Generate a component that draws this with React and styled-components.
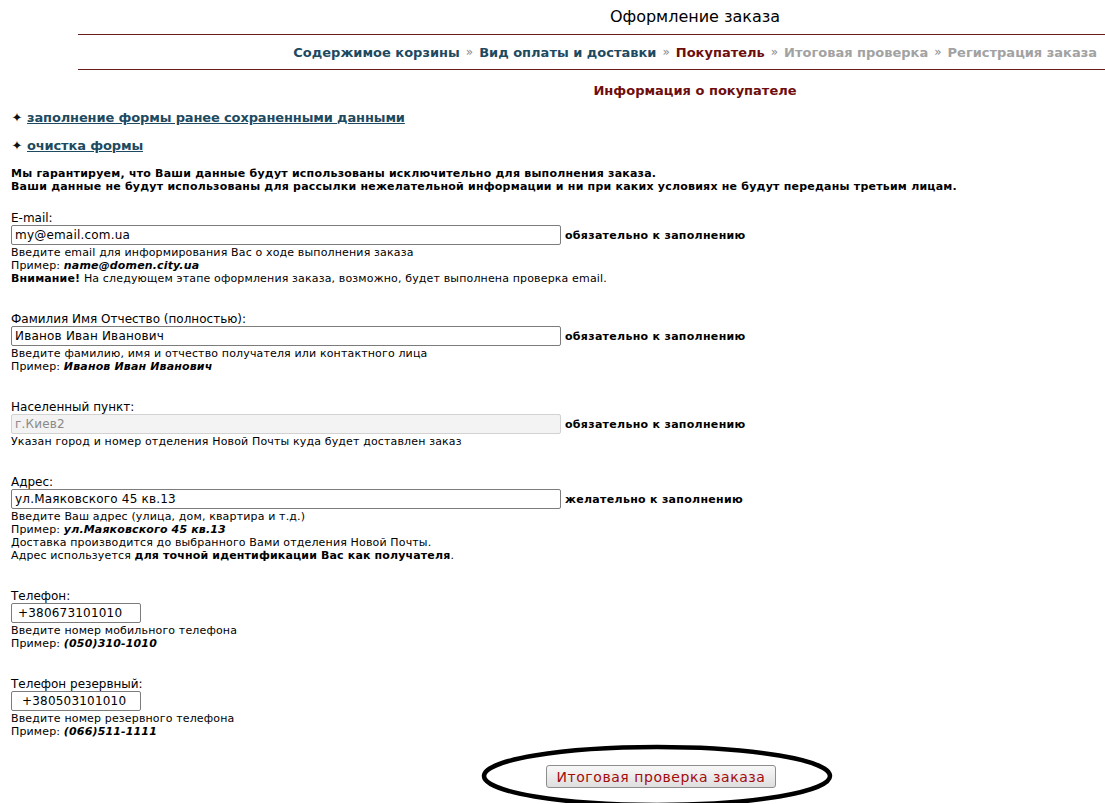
import React from "react";
import styled, { createGlobalStyle } from "styled-components";

const GlobalStyle = createGlobalStyle`
  html, body { margin: 0; padding: 0; background: #fff; }
  body {
    font-family: "DejaVu Sans", Verdana, sans-serif;
    color: #000;
    -webkit-font-smoothing: none;
  }
`;

const Page = styled.div`
  width: 1105px;
  position: relative;
`;

const Title = styled.h1`
  margin: 0;
  padding-left: 285px;
  height: 34px;
  line-height: 34px;
  text-align: center;
  font-size: 16px;
  font-weight: normal;
`;

const Crumbs = styled.nav`
  margin-left: 78px;
  height: 34px;
  border-top: 1px solid #6b1c1c;
  border-bottom: 1px solid #6b1c1c;
  display: flex;
  align-items: center;
  justify-content: flex-end;
  padding-right: 8px;
  font-size: 13px;
  font-weight: bold;
`;

const crumbColors = { done: "#1d4a60", current: "#6e0d0d", todo: "#a2a2a2" };

const Crumb = styled.span`
  color: ${(p) => crumbColors[p.$state]};
`;

const Sep = styled.span`
  color: #8a8a8a;
  font-weight: normal;
  margin: 0 6px;
  font-size: 12px;
`;

const SectionTitle = styled.h2`
  margin: 0;
  padding: 12px 0 0 285px;
  height: 22px;
  line-height: 18px;
  text-align: center;
  color: #6e0d0d;
  font-size: 13px;
  font-weight: bold;
`;

const Actions = styled.ul`
  list-style: none;
  margin: 0;
  padding: 0 0 0 11px;
  display: flex;
  flex-direction: column;
`;

const Action = styled.li`
  height: 28px;
  line-height: 18px;
  display: flex;
  align-items: center;
  gap: 4px;
  font-size: 13px;
  font-weight: bold;
`;

const Bullet = styled.span`
  font-size: 13px;
  color: #111;
  width: 12px;
  text-align: center;
`;

const ActionLink = styled.a`
  color: #1d4a60;
  text-decoration: underline;
  letter-spacing: -0.14px;
  cursor: pointer;
`;

const Notice = styled.p`
  margin: 7px 0 0;
  padding: 0 0 0 11px;
  font-size: 11px;
  font-weight: bold;
  line-height: 13px;
  letter-spacing: 0.22px;
`;

const Form = styled.form`
  margin-top: 18px;
  padding-left: 11px;
  display: flex;
  flex-direction: column;
  gap: 27px;
`;

const Field = styled.div`
  display: flex;
  flex-direction: column;
`;

const Label = styled.label`
  font-size: 12px;
  line-height: 14px;
`;

const InputRow = styled.div`
  display: flex;
  align-items: center;
  gap: 4px;
`;

const Input = styled.input`
  box-sizing: border-box;
  width: ${(p) => (p.$short ? "130px" : "550px")};
  height: 20px;
  margin: 0;
  padding: 0 ${(p) => (p.$short ? "6px" : "3px")};
  border: 1px solid ${(p) => (p.disabled ? "#d2d2d2" : "#7c7c7c")};
  border-radius: 2px;
  background: ${(p) => (p.disabled ? "#f3f3f3" : "#fff")};
  color: ${(p) => (p.disabled ? "#8a8a8a" : "#000")};
  font-family: "DejaVu Sans", Verdana, sans-serif;
  font-size: 12px;
  letter-spacing: 0.2px;
  outline: none;
`;

const Need = styled.span`
  font-size: 11px;
  font-weight: bold;
  letter-spacing: 0.3px;
`;

const Help = styled.div`
  margin-top: 1px;
  font-size: 11px;
  line-height: 13px;
  letter-spacing: 0.15px;
  b { font-weight: bold; }
  em { font-weight: bold; font-style: italic; }
`;

const Submit = styled.div`
  position: relative;
  margin-top: 27px;
  padding-left: 546px;
  height: 38px;
`;

const Button = styled.button`
  width: 230px;
  height: 23px;
  padding: 0;
  border: 1px solid #8d8d8d;
  border-radius: 3px;
  background: linear-gradient(#f8f8f8, #dedede);
  color: #a30d0d;
  font-family: "DejaVu Sans", Verdana, sans-serif;
  font-size: 14px;
  letter-spacing: 0.55px;
  cursor: pointer;
`;

const Ring = styled.svg`
  position: absolute;
  left: 478px;
  top: -22px;
  pointer-events: none;
`;

const fields = [
  {
    label: "E-mail:",
    value: "my@email.com.ua",
    need: "обязательно к заполнению",
    help: [
      "Введите email для информирования Вас о ходе выполнения заказа",
      <>Пример: <em>name@domen.city.ua</em></>,
      <><b>Внимание!</b> На следующем этапе оформления заказа, возможно, будет выполнена проверка email.</>,
    ],
  },
  {
    label: "Фамилия Имя Отчество (полностью):",
    value: "Иванов Иван Иванович",
    need: "обязательно к заполнению",
    help: [
      "Введите фамилию, имя и отчество получателя или контактного лица",
      <>Пример: <em>Иванов Иван Иванович</em></>,
    ],
  },
  {
    label: "Населенный пункт:",
    value: "г.Киев2",
    disabled: true,
    need: "обязательно к заполнению",
    help: ["Указан город и номер отделения Новой Почты куда будет доставлен заказ"],
  },
  {
    label: "Адрес:",
    value: "ул.Маяковского 45 кв.13",
    need: "желательно к заполнению",
    help: [
      "Введите Ваш адрес (улица, дом, квартира и т.д.)",
      <>Пример: <em>ул.Маяковского 45 кв.13</em></>,
      "Доставка производится до выбранного Вами отделения Новой Почты.",
      <>Адрес используется <b>для точной идентификации Вас как получателя</b>.</>,
    ],
  },
  {
    label: "Телефон:",
    value: "+380673101010",
    short: true,
    help: ["Введите номер мобильного телефона", <>Пример: <em>(050)310-1010</em></>],
  },
  {
    label: "Телефон резервный:",
    value: " +380503101010",
    short: true,
    help: ["Введите номер резервного телефона", <>Пример: <em>(066)511-1111</em></>],
  },
];

const steps = [
  ["Содержимое корзины", "done"],
  ["Вид оплаты и доставки", "done"],
  ["Покупатель", "current"],
  ["Итоговая проверка", "todo"],
  ["Регистрация заказа", "todo"],
];

export default function App() {
  return (
    <Page>
      <GlobalStyle />
      <Title>Оформление заказа</Title>
      <Crumbs>
        {steps.map(([name, state], i) => (
          <React.Fragment key={name}>
            {i > 0 && <Sep>»</Sep>}
            <Crumb $state={state}>{name}</Crumb>
          </React.Fragment>
        ))}
      </Crumbs>
      <SectionTitle>Информация о покупателе</SectionTitle>
      <Actions>
        <Action>
          <Bullet>✦</Bullet>
          <ActionLink>заполнение формы ранее сохраненными данными</ActionLink>
        </Action>
        <Action>
          <Bullet>✦</Bullet>
          <ActionLink>очистка формы</ActionLink>
        </Action>
      </Actions>
      <Notice>
        Мы гарантируем, что Ваши данные будут использованы исключительно для выполнения заказа.
        <br />
        Ваши данные не будут использованы для рассылки нежелательной информации и ни при каких условиях не будут переданы третьим лицам.
      </Notice>
      <Form onSubmit={(e) => e.preventDefault()}>
        {fields.map((f) => (
          <Field key={f.label}>
            <Label>{f.label}</Label>
            <InputRow>
              <Input defaultValue={f.value} disabled={f.disabled} $short={f.short} />
              {f.need && <Need>{f.need}</Need>}
            </InputRow>
            <Help>
              {f.help.map((line, i) => (
                <div key={i}>{line}</div>
              ))}
            </Help>
          </Field>
        ))}
      </Form>
      <Submit>
        <Button type="button">Итоговая проверка заказа</Button>
        <Ring width="360" height="66" viewBox="0 0 360 66">
          <ellipse cx="179" cy="33" rx="173" ry="29" fill="none" stroke="#000" strokeWidth="4.5" />
        </Ring>
      </Submit>
    </Page>
  );
}
